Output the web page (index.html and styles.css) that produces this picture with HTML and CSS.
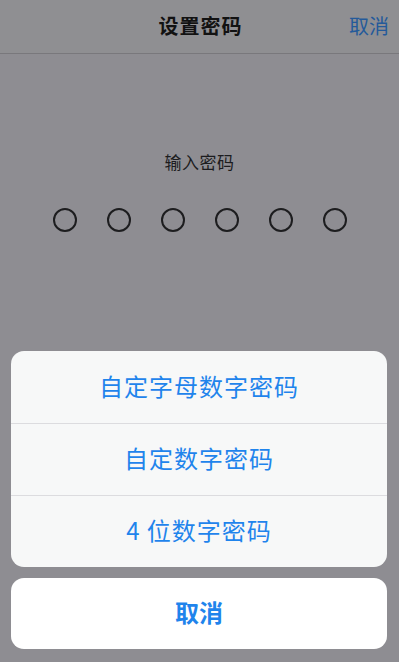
FILE: index.html
```html
<!DOCTYPE html>
<html lang="zh">
<head>
<meta charset="utf-8">
<link rel="stylesheet" href="styles.css">
</head>
<body>
<div class="screen">
  <header class="nav">
    <div class="nav-title">设置密码</div>
    <div class="nav-cancel">取消</div>
  </header>
  <main class="content">
    <div class="prompt">输入密码</div>
    <div class="dots">
      <span class="dot"></span><span class="dot"></span><span class="dot"></span>
      <span class="dot"></span><span class="dot"></span><span class="dot"></span>
    </div>
  </main>
  <div class="sheet">
    <div class="group">
      <div class="option">自定字母数字密码</div>
      <div class="option">自定数字密码</div>
      <div class="option">4 位数字密码</div>
    </div>
    <div class="cancel">取消</div>
  </div>
</div>
</body>
</html>
```

FILE: styles.css
```css
html, body {
  margin: 0;
  padding: 0;
}
body {
  font-family: "Noto Sans CJK SC", "Noto Sans", sans-serif;
  background: #8e8d92;
}
.screen {
  width: 399px;
  height: 662px;
  display: flex;
  flex-direction: column;
  background: #8e8d92;
  overflow: hidden;
}
.nav {
  height: 52px;
  border-bottom: 1px solid #79787c;
  display: grid;
  grid-template-columns: 1fr auto 1fr;
  align-items: center;
  background: #8f8f92;
  padding-bottom: 2px;
  box-sizing: border-box;
  height: 54px;
}
.nav-title {
  grid-column: 2;
  font-size: 20px;
  font-weight: 700;
  color: #121212;
  letter-spacing: 1px;
  padding-left: 2px;
}
.nav-cancel {
  grid-column: 3;
  justify-self: end;
  padding-right: 10px;
  font-size: 20px;
  color: #245a9a;
}
.content {
  flex: 1;
  display: flex;
  flex-direction: column;
  align-items: center;
  padding-top: 96px;
}
.prompt {
  font-size: 17px;
  color: #1c1c1e;
  line-height: 24px;
  letter-spacing: 0.5px;
}
.dots {
  display: flex;
  gap: 30px;
  margin-top: 34px;
}
.dot {
  width: 20px;
  height: 20px;
  border: 2px solid #1d1d1f;
  border-radius: 50%;
}
.sheet {
  padding: 0 12px 13px 11px;
  display: flex;
  flex-direction: column;
  gap: 11px;
}
.group {
  background: #f7f8f8;
  border-radius: 13px;
  overflow: hidden;
}
.option {
  height: 72px;
  box-sizing: border-box;
  padding-bottom: 4px;
  display: flex;
  align-items: center;
  justify-content: center;
  font-size: 24px;
  color: #1f84ec;
  letter-spacing: 1px;
}
.option + .option {
  border-top: 1px solid #dcdcdf;
}
.cancel {
  height: 71px;
  box-sizing: border-box;
  padding-bottom: 4px;
  background: #ffffff;
  border-radius: 13px;
  display: flex;
  align-items: center;
  justify-content: center;
  font-size: 24px;
  font-weight: 700;
  color: #1f84ec;
}
```
